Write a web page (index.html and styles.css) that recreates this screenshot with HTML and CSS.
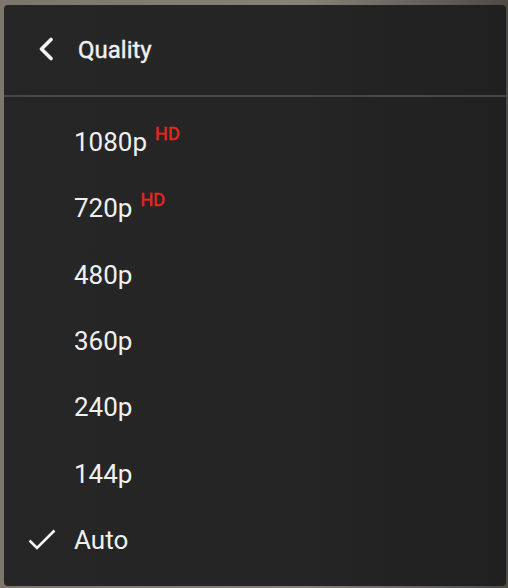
FILE: index.html
```html
<!DOCTYPE html>
<html lang="en">
<head>
    <meta charset="UTF-8">
    <meta name="viewport" content="width=device-width, initial-scale=1.0">
    <title>Quality</title>
    <link rel="stylesheet" href="styles.css">
</head>
<body>
    <div class="menu">
        <div class="menu-header">
            <svg class="back" width="16" height="24" viewBox="0 0 16 24">
                <path d="M13 2.5 L3.5 12 L13 21.5" fill="none" stroke="#f2f2f2" stroke-width="3.6" stroke-linecap="round" stroke-linejoin="round"/>
            </svg>
            <span class="title">Quality</span>
        </div>
        <ul class="options">
            <li class="option"><span class="mark"></span><span class="label">1080p</span><sup class="hd">HD</sup></li>
            <li class="option"><span class="mark"></span><span class="label">720p</span><sup class="hd">HD</sup></li>
            <li class="option"><span class="mark"></span><span class="label">480p</span></li>
            <li class="option"><span class="mark"></span><span class="label">360p</span></li>
            <li class="option"><span class="mark"></span><span class="label">240p</span></li>
            <li class="option"><span class="mark"></span><span class="label">144p</span></li>
            <li class="option selected">
                <span class="mark">
                    <svg width="28" height="22" viewBox="0 0 28 22">
                        <path d="M1.5 11.5 L9 19 L26.5 1.5" fill="none" stroke="#f2f2f2" stroke-width="2.6"/>
                    </svg>
                </span>
                <span class="label">Auto</span>
            </li>
        </ul>
    </div>
</body>
</html>
```

FILE: styles.css
```css
body {
    margin: 0;
    height: 588px;
    overflow: hidden;
    background: linear-gradient(90deg, #7b776d 0%, #86827a 60%, #4e4b45 100%);
    font-family: Roboto, "Liberation Sans", Arial, sans-serif;
}
.menu {
    margin: 5px 2px 0 4px;
    height: 581px;
    box-sizing: border-box;
    border-radius: 4px;
    background: linear-gradient(90deg, #262626 0%, #252525 55%, #202020 100%);
    color: #f0f0f0;
    overflow: hidden;
}
.menu-header {
    height: 92px;
    display: flex;
    align-items: center;
    padding-left: 34px;
    box-sizing: border-box;
    border-bottom: 2px solid #474747;
}
.back {
    display: block;
    margin-top: -2px;
}
.title {
    margin-left: 24px;
    font-size: 24px;
    font-weight: 400;
    line-height: 24px;
    -webkit-text-stroke: 0.4px #f0f0f0;
}
.options {
    list-style: none;
    margin: 0;
    padding: 12px 0 0 0;
}
.option {
    height: 66.3px;
    display: flex;
    align-items: center;
}
.mark {
    width: 46px;
    margin-left: 24px;
    display: flex;
    align-items: center;
}
.mark svg {
    display: block;
}
.label {
    font-size: 26px;
    line-height: 26px;
}
.hd {
    align-self: flex-start;
    margin-top: 16px;
    margin-left: 8px;
    font-size: 18px;
    font-weight: 400;
    line-height: 18px;
    -webkit-text-stroke: 0.5px #e5281f;
    color: #e5281f;
}
```
